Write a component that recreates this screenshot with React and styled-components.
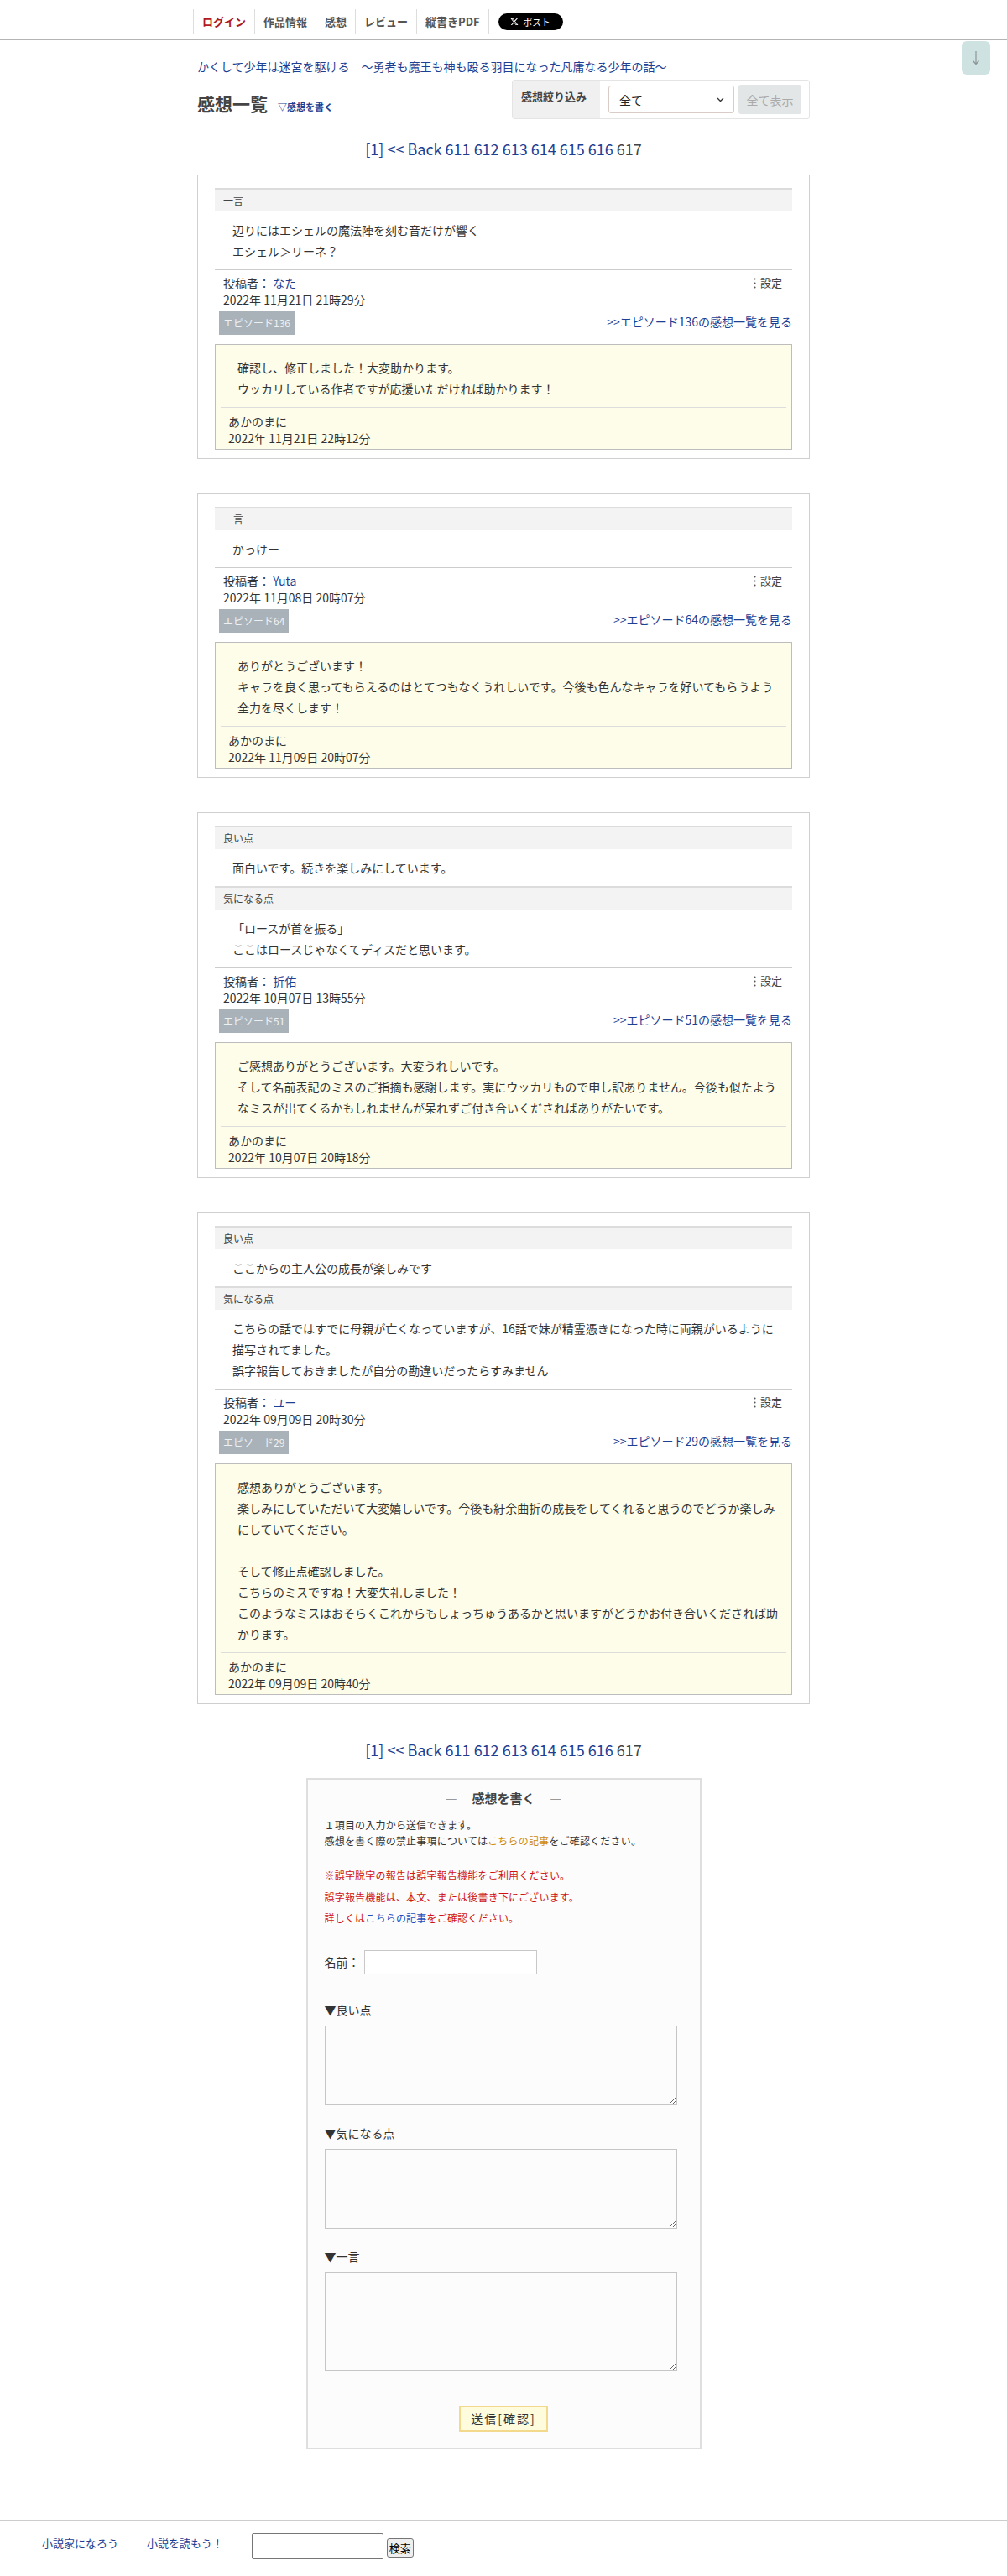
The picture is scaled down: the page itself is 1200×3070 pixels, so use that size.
import React from 'react';
import styled, { createGlobalStyle } from 'styled-components';

const LINK = '#1d3f94';

const GlobalStyle = createGlobalStyle`
  body {
    margin: 0;
    background: #fff;
    color: #333;
    font-family: "Noto Sans CJK JP", "Noto Sans", sans-serif;
  }
  a {
    text-decoration: none;
  }
`;

const Page = styled.div`
  position: relative;
  width: 1200px;
`;

const Header = styled.header`
  height: 46px;
  border-bottom: 2px solid #b4b4b4;
`;

const Nav = styled.nav`
  width: 740px;
  margin: 0 auto;
  padding-top: 11px;
  display: flex;
  align-items: flex-start;
`;

const NavItem = styled.a`
  height: 29px;
  line-height: 29px;
  padding: 0 10px;
  font-size: 13px;
  font-weight: bold;
  color: ${props => props.$accent ? '#b0191e' : '#555'};
  border-right: 1px solid #ddd;

  &:first-child {
    border-left: 1px solid #ddd;
  }
`;

const PostButton = styled.a`
  margin: 5px 0 0 11px;
  width: 77px;
  height: 20px;
  border-radius: 10px;
  background: #000;
  color: #fff;
  font-size: 11px;
  display: flex;
  align-items: center;
  justify-content: center;
  gap: 5px;
`;

const ScrollButton = styled.div`
  position: absolute;
  top: 49px;
  right: 20px;
  width: 34px;
  height: 40px;
  border-radius: 6px;
  background: #cfe2e2;
  display: flex;
  align-items: center;
  justify-content: center;
`;

const Main = styled.main`
  width: 730px;
  margin: 0 auto;
`;

const TitleLink = styled.a`
  display: block;
  margin-top: 21px;
  font-size: 14px;
  line-height: 20px;
  color: ${LINK};
`;

const TopRow = styled.div`
  display: flex;
  justify-content: space-between;
  align-items: flex-end;
  margin-top: 6px;
  padding-bottom: 4px;
  border-bottom: 1px solid #ccc;
`;

const Heading = styled.h2`
  margin: 0;
  display: flex;
  align-items: baseline;
  gap: 12px;
  font-size: 21px;
  line-height: 30px;
  font-weight: bold;
  color: #444;
`;

const WriteLink = styled.a`
  font-size: 11px;
  font-weight: bold;
  color: ${LINK};
`;

const FilterBox = styled.div`
  display: flex;
  box-sizing: border-box;
  height: 47px;
  border: 1px solid #e4e4e4;
  border-radius: 3px;
  overflow: hidden;
`;

const FilterLabel = styled.div`
  box-sizing: border-box;
  width: 104px;
  padding: 10px 0 0 10px;
  background: #f0f0f0;
  font-size: 13px;
  font-weight: bold;
  line-height: 18px;
  color: #444;
`;

const SelectWrap = styled.div`
  position: relative;
  margin: 6px 0 0 10px;
  width: 150px;
  height: 33px;
`;

const Select = styled.select`
  appearance: none;
  box-sizing: border-box;
  width: 100%;
  height: 100%;
  padding-left: 12px;
  border: 1px solid #d9cbc5;
  border-radius: 3px;
  background: #fff;
  color: #222;
  font-family: inherit;
  font-size: 14px;
`;

const Chevron = styled.svg`
  position: absolute;
  right: 12px;
  top: 14px;
  pointer-events: none;
`;

const ShowAllButton = styled.button`
  margin: 5px 9px 0 5px;
  width: 75px;
  height: 35px;
  border: none;
  border-radius: 3px;
  background: #e3e6e6;
  color: #aaa;
  font-family: inherit;
  font-size: 14px;
`;

const Pager = styled.div`
  text-align: center;
  font-size: 18px;
  line-height: 26px;
  margin: ${props => props.$bottom ? '0 0 21px' : '17px 0 18px'};
  color: #444;

  a {
    color: ${LINK};
  }
`;

const Card = styled.article`
  border: 1px solid #cfcfcf;
  padding: 15px 20px 10px;
  margin-bottom: 41px;
`;

const SectionHeader = styled.div`
  border-top: 2px solid #dcdcdc;
  background: #f3f3f3;
  height: 26px;
  line-height: 26px;
  padding-left: 10px;
  font-size: 12px;
  color: #444;
`;

const SectionBody = styled.div`
  padding: 10px 21px 9px;
  font-size: 14px;
  line-height: 25px;
  white-space: pre-wrap;
`;

const Author = styled.div`
  border-top: 1px solid #ccc;
  padding: 5px 12px 0 10px;
  display: flex;
  justify-content: space-between;
  align-items: flex-start;
  font-size: 14px;
  line-height: 20px;

  a {
    color: ${LINK};
  }
`;

const Settings = styled.span`
  display: flex;
  align-items: center;
  gap: 5px;
  font-size: 13px;
  color: #444;
`;

const BadgeRow = styled.div`
  display: flex;
  justify-content: space-between;
  align-items: center;
  margin-top: 4px;
  padding-left: 5px;
`;

const Badge = styled.span`
  height: 28px;
  line-height: 28px;
  padding: 0 5px;
  background: #a9b1b9;
  color: #eef1f3;
  font-size: 12px;
`;

const EpisodeLink = styled.a`
  font-size: 14px;
  line-height: 20px;
  margin-bottom: 4px;
  color: ${LINK};
`;

const Reply = styled.div`
  margin-top: 11px;
  border: 1px solid #bdbdbd;
  background: #fdfdea;
`;

const ReplyText = styled.div`
  padding: 15px 14px 9px 26px;
  font-size: 14px;
  line-height: 25px;
  white-space: pre-wrap;
`;

const ReplyFooter = styled.div`
  margin: 0 6px;
  border-top: 1px solid #ddd;
  padding: 6px 0 3px 9px;
  font-size: 14px;
  line-height: 20px;
`;

const FormBox = styled.form`
  box-sizing: border-box;
  width: 471px;
  margin: 0 auto;
  border: 2px solid #dedede;
  background: #fcfcfc;
  padding: 10px 20px 19px;
`;

const FormTitle = styled.div`
  text-align: center;
  font-size: 15px;
  font-weight: bold;
  line-height: 24px;
  color: #444;
`;

const Dash = styled.span`
  color: #999;
  font-weight: normal;
  margin: 0 18px;
`;

const Intro = styled.div`
  margin-top: 10px;
  font-size: 12px;
  line-height: 19px;
  letter-spacing: 0.2px;
  color: #333;
`;

const Notice = styled.div`
  margin-top: 19px;
  font-size: 12px;
  line-height: 25.5px;
  letter-spacing: 0.2px;
  color: #d01414;
`;

const InlineLink = styled.a`
  color: ${props => props.$tone === 'orange' ? '#d08c0c' : '#2150c0'};
`;

const NameRow = styled.label`
  margin-top: 25px;
  display: flex;
  align-items: center;
  gap: 5px;
  font-size: 14px;
  color: #333;
`;

const NameInput = styled.input`
  box-sizing: border-box;
  width: 206px;
  height: 29px;
  border: 1px solid #c8c8c8;
  background: #fff;
`;

const FieldLabel = styled.div`
  margin-top: ${props => props.$first ? '32px' : '23px'};
  font-size: 14px;
  line-height: 20px;
  color: #333;
`;

const TextArea = styled.textarea`
  display: block;
  box-sizing: border-box;
  margin-top: 9px;
  width: 420px;
  height: ${props => props.$tall ? '118px' : '95px'};
  border: 1px solid #c6c6c6;
  background: #fcfcfc;
`;

const SubmitRow = styled.div`
  text-align: center;
  margin-top: 41px;
`;

const SubmitButton = styled.button`
  width: 106px;
  height: 31px;
  background: #fffbdd;
  border: 2px solid #f3d98c;
  font-family: inherit;
  font-size: 14px;
  letter-spacing: 2px;
  color: #333;
`;

const Footer = styled.footer`
  margin-top: 84px;
  border-top: 1px solid #ccc;
  padding: 15px 0 18px 50px;
  display: flex;
  align-items: flex-start;
`;

const FooterLink = styled.a`
  font-size: 13px;
  line-height: 20px;
  margin: 2px 34px 0 0;
  color: ${LINK};
`;

const SearchInput = styled.input`
  box-sizing: border-box;
  width: 157px;
  height: 31px;
  border: 1px solid #767676;
  border-radius: 2px;
`;

const SearchButton = styled.button`
  margin: 6px 0 0 4px;
  height: 23px;
  padding: 0 2px;
  border: 1px solid #767676;
  border-radius: 3px;
  background: #efefef;
  font-family: inherit;
  font-size: 13px;
  color: #000;
`;

const reviews = [
  {
    sections: [{ label: '一言', text: '辺りにはエシェルの魔法陣を刻む音だけが響く\nエシェル＞リーネ？' }],
    author: 'なた',
    date: '2022年 11月21日 21時29分',
    episode: 136,
    reply: '確認し、修正しました！大変助かります。\nウッカリしている作者ですが応援いただければ助かります！',
    replyDate: '2022年 11月21日 22時12分',
  },
  {
    sections: [{ label: '一言', text: 'かっけー' }],
    author: 'Yuta',
    date: '2022年 11月08日 20時07分',
    episode: 64,
    reply: 'ありがとうございます！\nキャラを良く思ってもらえるのはとてつもなくうれしいです。今後も色んなキャラを好いてもらうよう全力を尽くします！',
    replyDate: '2022年 11月09日 20時07分',
  },
  {
    sections: [
      { label: '良い点', text: '面白いです。続きを楽しみにしています。' },
      { label: '気になる点', text: '「ロースが首を振る」\nここはロースじゃなくてディスだと思います。' },
    ],
    author: '折佑',
    date: '2022年 10月07日 13時55分',
    episode: 51,
    reply: 'ご感想ありがとうございます。大変うれしいです。\nそして名前表記のミスのご指摘も感謝します。実にウッカリもので申し訳ありません。今後も似たようなミスが出てくるかもしれませんが呆れずご付き合いくださればありがたいです。',
    replyDate: '2022年 10月07日 20時18分',
  },
  {
    sections: [
      { label: '良い点', text: 'ここからの主人公の成長が楽しみです' },
      { label: '気になる点', text: 'こちらの話ではすでに母親が亡くなっていますが、16話で妹が精霊憑きになった時に両親がいるように描写されてました。\n誤字報告しておきましたが自分の勘違いだったらすみません' },
    ],
    author: 'ユー',
    date: '2022年 09月09日 20時30分',
    episode: 29,
    reply: '感想ありがとうございます。\n楽しみにしていただいて大変嬉しいです。今後も紆余曲折の成長をしてくれると思うのでどうか楽しみにしていてください。\n\nそして修正点確認しました。\nこちらのミスですね！大変失礼しました！\nこのようなミスはおそらくこれからもしょっちゅうあるかと思いますがどうかお付き合いくだされば助かります。',
    replyDate: '2022年 09月09日 20時40分',
  },
];

const XLogo = () => (
  <svg width="10" height="10" viewBox="0 0 24 24" fill="#fff">
    <path d="M18.244 2.25h3.308l-7.227 8.26 8.502 11.24H16.17l-5.214-6.817L4.99 21.75H1.68l7.73-8.835L1.254 2.25H8.08l4.713 6.231zm-1.161 17.52h1.833L7.084 4.126H5.117z" />
  </svg>
);

const DotsIcon = () => (
  <svg width="3" height="13" viewBox="0 0 3 13" fill="#555">
    <circle cx="1.5" cy="1.5" r="1.1" />
    <circle cx="1.5" cy="6.5" r="1.1" />
    <circle cx="1.5" cy="11.5" r="1.1" />
  </svg>
);

const PagerLinks = ({ bottom }) => (
  <Pager $bottom={bottom}>
    <a href="#">[1]</a> <a href="#">&lt;&lt; Back</a>{' '}
    {[611, 612, 613, 614, 615, 616].map(n => (
      <React.Fragment key={n}><a href="#">{n}</a> </React.Fragment>
    ))}
    617
  </Pager>
);

const ReviewCard = ({ review }) => (
  <Card>
    {review.sections.map(section => (
      <React.Fragment key={section.label}>
        <SectionHeader>{section.label}</SectionHeader>
        <SectionBody>{section.text}</SectionBody>
      </React.Fragment>
    ))}
    <Author>
      <div>
        投稿者： <a href="#">{review.author}</a>
        <div>{review.date}</div>
      </div>
      <Settings><DotsIcon />設定</Settings>
    </Author>
    <BadgeRow>
      <Badge>エピソード{review.episode}</Badge>
      <EpisodeLink href="#">&gt;&gt;エピソード{review.episode}の感想一覧を見る</EpisodeLink>
    </BadgeRow>
    <Reply>
      <ReplyText>{review.reply}</ReplyText>
      <ReplyFooter>
        あかのまに
        <div>{review.replyDate}</div>
      </ReplyFooter>
    </Reply>
  </Card>
);

export default function App() {
  return (
    <Page>
      <GlobalStyle />
      <Header>
        <Nav>
          <NavItem href="#" $accent>ログイン</NavItem>
          <NavItem href="#">作品情報</NavItem>
          <NavItem href="#">感想</NavItem>
          <NavItem href="#">レビュー</NavItem>
          <NavItem href="#">縦書きPDF</NavItem>
          <PostButton href="#"><XLogo />ポスト</PostButton>
        </Nav>
      </Header>

      <ScrollButton>
        <svg width="10" height="18" viewBox="0 0 10 18" fill="none" stroke="#8a9696" strokeWidth="1.2">
          <path d="M5 1v15M1.5 12.5L5 16.5l3.5-4" />
        </svg>
      </ScrollButton>

      <Main>
        <TitleLink href="#">かくして少年は迷宮を駆ける　～勇者も魔王も神も殴る羽目になった凡庸なる少年の話～</TitleLink>
        <TopRow>
          <Heading>
            感想一覧
            <WriteLink href="#">▽感想を書く</WriteLink>
          </Heading>
          <FilterBox>
            <FilterLabel>感想絞り込み</FilterLabel>
            <SelectWrap>
              <Select defaultValue="all">
                <option value="all">全て</option>
              </Select>
              <Chevron width="9" height="6" viewBox="0 0 9 6" fill="none" stroke="#333" strokeWidth="1.3">
                <path d="M1 1l3.5 3.5L8 1" />
              </Chevron>
            </SelectWrap>
            <ShowAllButton type="button">全て表示</ShowAllButton>
          </FilterBox>
        </TopRow>

        <PagerLinks />

        {reviews.map(review => (
          <ReviewCard key={review.date} review={review} />
        ))}

        <PagerLinks bottom />

        <FormBox>
          <FormTitle>
            <Dash>—</Dash>感想を書く<Dash>—</Dash>
          </FormTitle>
          <Intro>
            １項目の入力から送信できます。
            <br />
            感想を書く際の禁止事項については<InlineLink href="#" $tone="orange">こちらの記事</InlineLink>をご確認ください。
          </Intro>
          <Notice>
            ※誤字脱字の報告は誤字報告機能をご利用ください。
            <br />
            誤字報告機能は、本文、または後書き下にございます。
            <br />
            詳しくは<InlineLink href="#">こちらの記事</InlineLink>をご確認ください。
          </Notice>
          <NameRow>
            名前：
            <NameInput type="text" />
          </NameRow>
          <FieldLabel $first>▼良い点</FieldLabel>
          <TextArea />
          <FieldLabel>▼気になる点</FieldLabel>
          <TextArea />
          <FieldLabel>▼一言</FieldLabel>
          <TextArea $tall />
          <SubmitRow>
            <SubmitButton type="button">送信[確認]</SubmitButton>
          </SubmitRow>
        </FormBox>
      </Main>

      <Footer>
        <FooterLink href="#">小説家になろう</FooterLink>
        <FooterLink href="#">小説を読もう！</FooterLink>
        <SearchInput type="text" />
        <SearchButton type="button">検索</SearchButton>
      </Footer>
    </Page>
  );
}
